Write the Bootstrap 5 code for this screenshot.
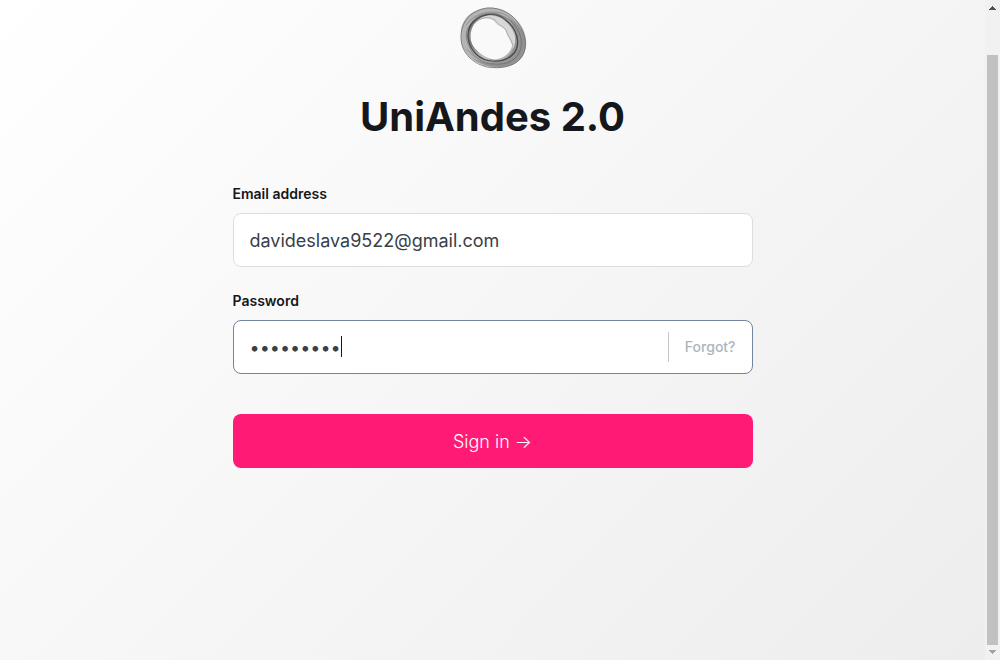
<!DOCTYPE html>
<html lang="en">
<head>
<meta charset="utf-8">
<meta name="viewport" content="width=device-width, initial-scale=1">
<title>UniAndes 2.0</title>
<link rel="stylesheet" href="https://cdn.jsdelivr.net/npm/bootstrap@5.3.0/dist/css/bootstrap.min.css">
<style>
  body { font-family: Inter, sans-serif; color: #15171a; }
  .portal { background: linear-gradient(315deg, #ededed 0%, #ffffff 100%); }
  .signin { max-width: 520px; }
  .brand-icon { width: 70px; height: 64px; margin-top: 6px; }
  .site-title { font-size: 40px; line-height: 48px; font-weight: 700; margin: 23px 0 44px; }
  .field-label { font-size: 14px; line-height: 18px; font-weight: 600; margin-bottom: 10px; }
  .field { height: 54px; padding: 0 16px; border: 1px solid #dddddd; border-radius: 8px; background: #fff; }
  .field.active { border-color: #7485a0; }
  .field input { font-size: 18px; color: #394047; outline: 0; caret-color: transparent; }
  .caret { left: 91px; top: 15px; width: 1px; height: 21px; background: #15171a; }
  .forgot { height: 30px; padding-left: 16px; border-left: 1px solid #c2c7cc; font-size: 14px; line-height: 30px; font-weight: 500; color: #abb4be; }
  .field-gap { margin-bottom: 25px; }
  .btn-signin { height: 54px; margin-top: 40px; border: 0; border-radius: 8px; background: #ff1a75; color: #fff; font-size: 18px; font-weight: 300; }
  .btn-signin:hover { background: #e6176a; color: #fff; }
  .scroll-rail { width: 15px; background: #f1f1f1; }
  .scroll-thumb { width: 11px; margin: 38px 0 4px; background: #c1c1c1; }
</style>
<script src="https://cdn.jsdelivr.net/npm/bootstrap@5.3.0/dist/js/bootstrap.bundle.min.js"></script>
</head>
<body>
<div class="d-flex vh-100 overflow-hidden">
  <main class="portal flex-grow-1 d-flex justify-content-center">
    <form class="signin w-100 d-flex flex-column">
      <svg class="brand-icon align-self-center" viewBox="0 0 70 64" aria-hidden="true">
        <path fill="#b4b4b4" fill-rule="evenodd" d="M3 29C2 15 12 4 28 2C43 0 55 8 62 18C70 29 70 43 64 51C57 61 44 63 32 61C20 59 5 50 3 35ZM16 18C11 26 11 37 19 45C25 53 34 56 43 52C50 49 55 43 54 37C53 31 49 28 48 24C44 20 41 20 37 14C32 10 21 11 16 18Z"/>
        <path fill="#d8d8d8" d="M18 16C24 9 32 8 40 11C48 14 55 22 57 31C58 37 57 41 55 42C53 35 49 30 47 24C43 19 40 21 36 15C31 11 24 12 18 16Z"/>
        <path fill="#868686" opacity=".7" d="M50 12C60 17 68 27 68 38C67 51 60 59 45 61C34 62 23 59 14 52C26 58 39 58 49 51C60 42 60 24 50 12Z"/>
        <path fill="#777" opacity=".6" d="M13 17C20 7 31 4 43 9C34 8 23 8 17 17C9 28 13 41 21 49C10 43 6 29 13 17Z"/>
        <g fill="none" stroke="#4a4a4a" stroke-width=".8">
          <path stroke="#707070" d="M3 29C4 14 14 4 29 2C44 1 56 9 62 20C69 31 69 44 63 52C56 61 42 63 29 61C13 57 2 45 3 29Z"/>
          <path stroke-width="1.2" d="M15 16C26 5 41 7 50 16C61 27 63 41 54 49C44 58 27 57 18 48C9 39 7 25 15 16Z"/>
          <path opacity=".6" d="M13 21C21 9 34 5 45 11C57 18 63 35 57 47C47 59 29 55 20 46C11 38 8 29 13 21Z"/>
          <path opacity=".6" d="M10 22C17 10 30 6 41 9C53 12 61 22 63 33C65 47 56 57 43 58C30 60 16 53 12 42C8 34 7 28 10 22Z"/>
          <path stroke="#888" d="M8 19C16 8 30 4 43 7C55 11 64 22 65 33C67 46 58 56 46 59C32 60 18 55 9 43"/>
          <path stroke="#999" stroke-width=".7" d="M16 18C22 11 31 10 37 14C41 20 44 19 48 24C49 29 54 34 55 40"/>
        </g>
      </svg>
      <h1 class="site-title text-center">UniAndes 2.0</h1>
      <label class="field-label" for="email">Email address</label>
      <div class="field field-gap d-flex align-items-center">
        <input id="email" class="border-0 p-0 bg-transparent flex-grow-1" type="email" value="davideslava9522@gmail.com">
      </div>
      <label class="field-label" for="password">Password</label>
      <div class="field active d-flex align-items-center">
        <div class="position-relative flex-grow-1 align-self-stretch d-flex">
          <input id="password" class="border-0 p-0 bg-transparent w-100" type="password" value="password9">
          <span class="caret position-absolute"></span>
        </div>
        <a class="forgot text-decoration-none" href="#">Forgot?</a>
      </div>
      <button class="btn btn-signin" type="submit">Sign in →</button>
    </form>
  </main>
  <div class="scroll-rail flex-shrink-0 d-flex flex-column align-items-center" aria-hidden="true">
    <svg width="15" height="17" shape-rendering="crispEdges"><path fill="#505050" d="M7 6h1v1h1v1h1v1h1v1H4V9h1V8h1V7h1z"/></svg>
    <div class="scroll-thumb flex-grow-1"></div>
    <svg width="15" height="11" shape-rendering="crispEdges"><path fill="#a3a3a3" d="M4 1h7v1h-1v1H9v1H8v1H7V4H6V3H5V2H4z"/></svg>
  </div>
</div>
</body>
</html>
